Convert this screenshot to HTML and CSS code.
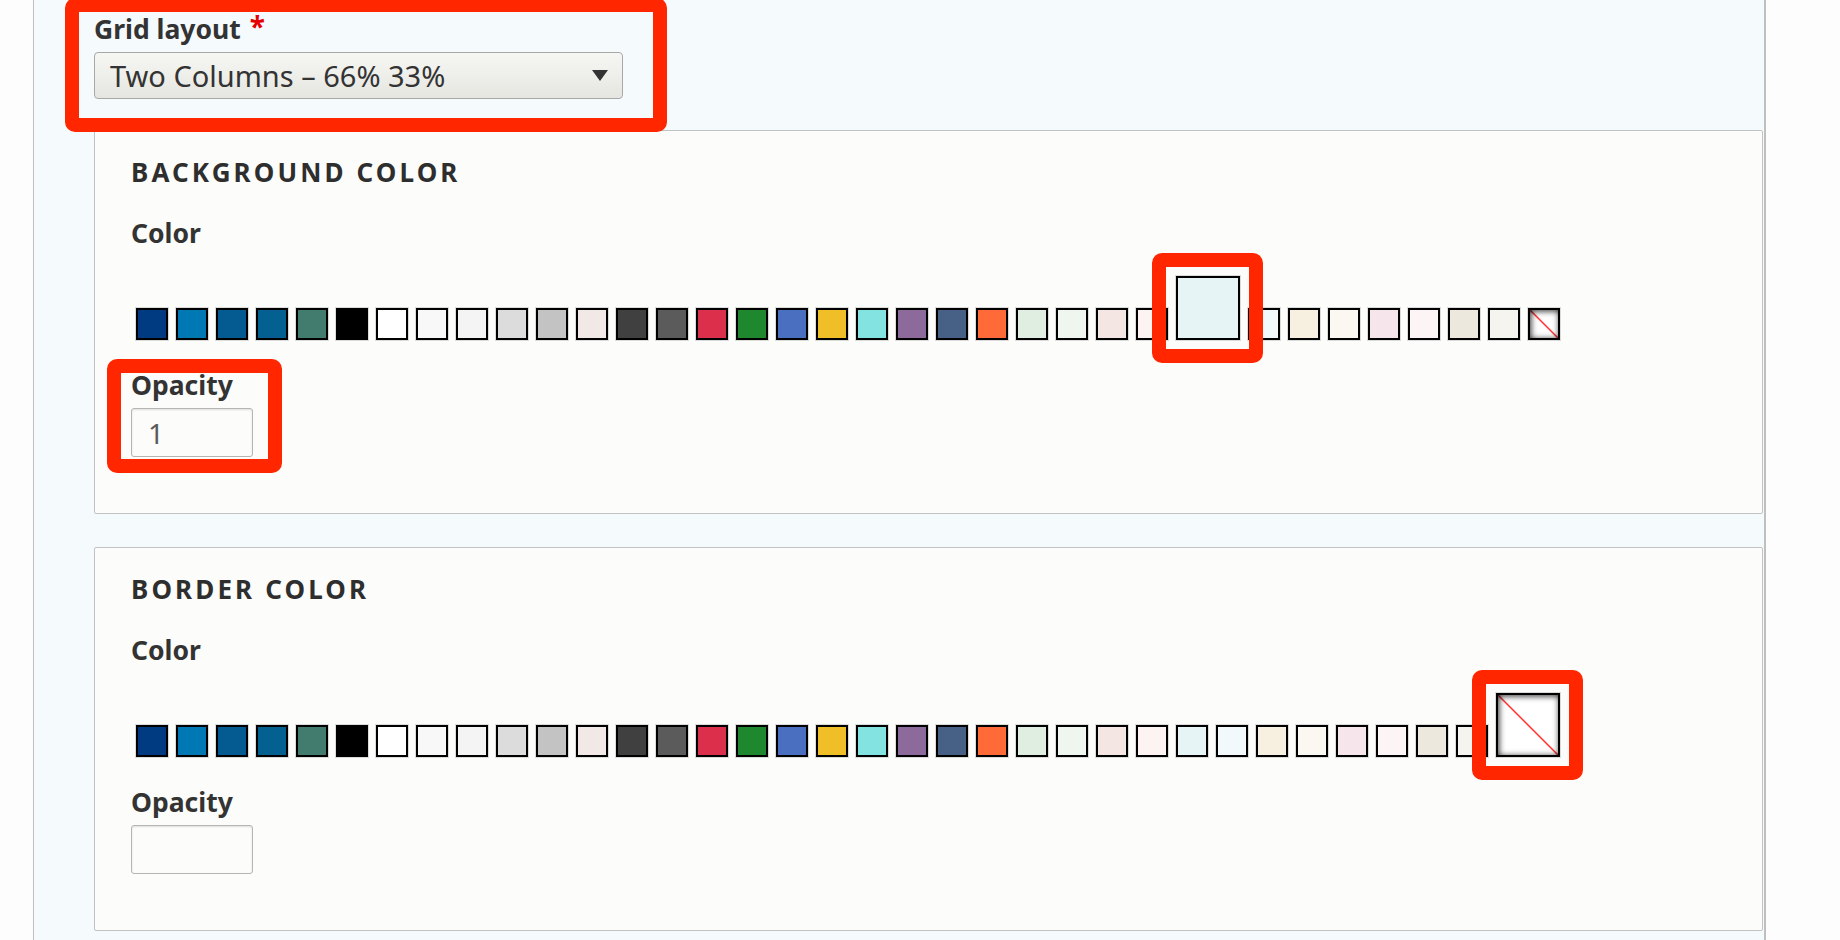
FILE: index.html
```html
<!DOCTYPE html>
<html lang="en">
<head>
<meta charset="utf-8">
<title>Grid layout settings</title>
<link rel="stylesheet" href="styles.css">
</head>
<body>
<div class="panel">
  <div class="form-item layout-item annotated">
    <label class="label">Grid layout <span class="req">*</span></label>
    <div class="select">
      <span class="select-text">Two Columns – 66% 33%</span>
      <svg class="arrow" width="16" height="11" viewBox="0 0 16 11"><polygon points="0,0 16,0 8,11" fill="#333"/></svg>
    </div>
  </div>

  <div class="fieldset">
    <div class="legend">Background color</div>
    <div class="label color-label">Color</div>
    <div class="swatches">
      <span class="swatch" style="--c:#003a80"></span>
      <span class="swatch" style="--c:#0078b4"></span>
      <span class="swatch" style="--c:#045b92"></span>
      <span class="swatch" style="--c:#036091"></span>
      <span class="swatch" style="--c:#427c6f"></span>
      <span class="swatch" style="--c:#000000"></span>
      <span class="swatch" style="--c:#ffffff"></span>
      <span class="swatch" style="--c:#f8f8f8"></span>
      <span class="swatch" style="--c:#f4f4f4"></span>
      <span class="swatch" style="--c:#dcdcdc"></span>
      <span class="swatch" style="--c:#c3c3c3"></span>
      <span class="swatch" style="--c:#f2e8e6"></span>
      <span class="swatch" style="--c:#404040"></span>
      <span class="swatch" style="--c:#5b5b5b"></span>
      <span class="swatch" style="--c:#dc2f4c"></span>
      <span class="swatch" style="--c:#1f872d"></span>
      <span class="swatch" style="--c:#4a6fc1"></span>
      <span class="swatch" style="--c:#f0bf28"></span>
      <span class="swatch" style="--c:#82e3e0"></span>
      <span class="swatch" style="--c:#8c6a9b"></span>
      <span class="swatch" style="--c:#476186"></span>
      <span class="swatch" style="--c:#ff6a38"></span>
      <span class="swatch" style="--c:#e0eee1"></span>
      <span class="swatch" style="--c:#eef6ef"></span>
      <span class="swatch" style="--c:#f4e6e3"></span>
      <span class="swatch" style="--c:#fcf3f2"></span>
      <span class="swatch big marked" style="--c:#e7f4f5"></span>
      <span class="swatch" style="--c:#f1f9fb"></span>
      <span class="swatch" style="--c:#f7f0e1"></span>
      <span class="swatch" style="--c:#faf8f1"></span>
      <span class="swatch" style="--c:#f6e6ec"></span>
      <span class="swatch" style="--c:#fdf4f6"></span>
      <span class="swatch" style="--c:#ede8dd"></span>
      <span class="swatch" style="--c:#f5f4ef"></span>
      <span class="swatch none"></span>
    </div>
    <div class="form-item opacity-item annotated">
      <div class="label opacity-label">Opacity</div>
      <div class="input">1</div>
    </div>
  </div>

  <div class="fieldset">
    <div class="legend">Border color</div>
    <div class="label color-label">Color</div>
    <div class="swatches">
      <span class="swatch" style="--c:#003a80"></span>
      <span class="swatch" style="--c:#0078b4"></span>
      <span class="swatch" style="--c:#045b92"></span>
      <span class="swatch" style="--c:#036091"></span>
      <span class="swatch" style="--c:#427c6f"></span>
      <span class="swatch" style="--c:#000000"></span>
      <span class="swatch" style="--c:#ffffff"></span>
      <span class="swatch" style="--c:#f8f8f8"></span>
      <span class="swatch" style="--c:#f4f4f4"></span>
      <span class="swatch" style="--c:#dcdcdc"></span>
      <span class="swatch" style="--c:#c3c3c3"></span>
      <span class="swatch" style="--c:#f2e8e6"></span>
      <span class="swatch" style="--c:#404040"></span>
      <span class="swatch" style="--c:#5b5b5b"></span>
      <span class="swatch" style="--c:#dc2f4c"></span>
      <span class="swatch" style="--c:#1f872d"></span>
      <span class="swatch" style="--c:#4a6fc1"></span>
      <span class="swatch" style="--c:#f0bf28"></span>
      <span class="swatch" style="--c:#82e3e0"></span>
      <span class="swatch" style="--c:#8c6a9b"></span>
      <span class="swatch" style="--c:#476186"></span>
      <span class="swatch" style="--c:#ff6a38"></span>
      <span class="swatch" style="--c:#e0eee1"></span>
      <span class="swatch" style="--c:#eef6ef"></span>
      <span class="swatch" style="--c:#f4e6e3"></span>
      <span class="swatch" style="--c:#fcf3f2"></span>
      <span class="swatch" style="--c:#e7f4f5"></span>
      <span class="swatch" style="--c:#f1f9fb"></span>
      <span class="swatch" style="--c:#f7f0e1"></span>
      <span class="swatch" style="--c:#faf8f1"></span>
      <span class="swatch" style="--c:#f6e6ec"></span>
      <span class="swatch" style="--c:#fdf4f6"></span>
      <span class="swatch" style="--c:#ede8dd"></span>
      <span class="swatch" style="--c:#f5f4ef"></span>
      <span class="swatch none big marked"></span>
    </div>
    <div class="form-item">
      <div class="label opacity-label">Opacity</div>
      <div class="input"></div>
    </div>
  </div>
</div>
</body>
</html>
```

FILE: styles.css
```css
* { box-sizing: border-box; }

html, body {
  margin: 0;
  padding: 0;
}

body {
  background: #fdfdfd;
  font-family: "Noto Sans", "DejaVu Sans", sans-serif;
  color: #333;
}

.panel {
  margin-left: 33px;
  width: 1733px;
  min-height: 940px;
  border-left: 1px solid #bfbfbf;
  border-right: 2px solid #bfbfbf;
  background: #f5fafd;
  padding: 14px 1px 0 60px;
}

.form-item {
  position: relative;
}

.layout-item {
  width: 529px;
  margin-bottom: 31px;
}

.label {
  display: block;
  font-size: 26.5px;
  font-weight: 700;
  line-height: 30px;
  color: #333;
}

.req {
  color: #e60000;
  font-size: 28px;
  line-height: 0;
  margin-left: 2px;
  vertical-align: 2px;
}

.select {
  margin-top: 8px;
  height: 47px;
  border: 1px solid #a8a8a8;
  border-radius: 4px;
  background: linear-gradient(#f6f6f3, #e6e6e1);
  display: flex;
  align-items: center;
  justify-content: space-between;
  padding: 0 14px 0 15px;
  font-size: 29px;
  line-height: 1.3;
  color: #333;
}

.arrow {
  display: block;
  flex: none;
}

.fieldset {
  border: 1px solid #c2c2c2;
  border-radius: 2px;
  background: #fcfcfa;
  padding: 28px 36px 56px;
}

.fieldset + .fieldset {
  margin-top: 33px;
}

.legend {
  font-size: 26px;
  font-weight: 700;
  line-height: 26px;
  letter-spacing: 0.12em;
  text-transform: uppercase;
  color: #2e2e2e;
}

.color-label {
  margin-top: 33px;
}

.swatches {
  display: flex;
  align-items: flex-end;
  gap: 8px;
  height: 64px;
  margin-top: 28px;
  padding-left: 5px;
}

.swatch {
  flex: none;
  width: 32px;
  height: 32px;
  border: 2px solid #000;
  background: var(--c);
  box-shadow: 0 0 0 1px rgba(0, 0, 0, 0.13);
}

.swatch.big {
  width: 64px;
  height: 64px;
}

.swatch.none {
  background: linear-gradient(to top right, #fff calc(50% - 1.5px), #ff3030 50%, #fff calc(50% + 1.5px));
  box-shadow: inset 1px 1px 6px rgba(0, 0, 0, 0.85), 0 0 0 1px rgba(0, 0, 0, 0.13);
}

.swatch.marked {
  position: relative;
}

.annotated::before,
.swatch.marked::before {
  content: "";
  position: absolute;
  border: 14px solid #ff2600;
  border-radius: 10px;
  z-index: 1;
  pointer-events: none;
}

.layout-item::before {
  top: -16px;
  left: -29px;
  right: -44px;
  bottom: -33px;
}

.opacity-item {
  width: 122px;
}

.opacity-item::before {
  top: -11px;
  left: -24px;
  right: -29px;
  bottom: -16px;
}

.swatch.marked::before {
  top: -25px;
  left: -26px;
  right: -25px;
  bottom: -25px;
}

.opacity-label {
  margin-top: 30px;
}

.input {
  margin-top: 8px;
  width: 122px;
  height: 49px;
  border: 1px solid #b5b5b5;
  border-radius: 3px;
  background: #fcfcfa;
  box-shadow: inset 0 1px 2px rgba(0, 0, 0, 0.12);
  padding-left: 16px;
  display: flex;
  align-items: center;
  font-size: 28px;
  color: #5a5a5a;
}
```
